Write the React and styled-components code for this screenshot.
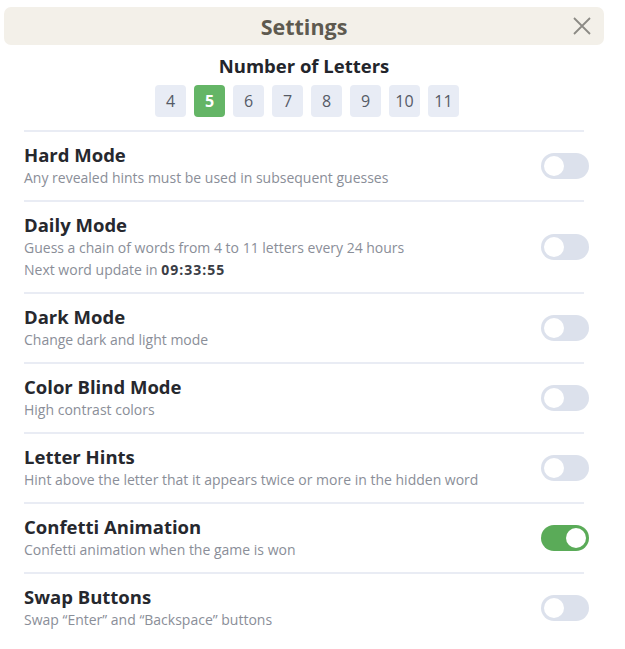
import React, { useState } from 'react';
import styled, { createGlobalStyle } from 'styled-components';

const GlobalStyle = createGlobalStyle`
  body {
    margin: 0;
    background: #ffffff;
    font-family: 'Open Sans', 'Noto Sans', sans-serif;
  }
`;

const Panel = styled.div`
  width: 625px;
  padding-top: 7px;
`;

const Header = styled.div`
  position: relative;
  margin-left: 4px;
  width: 600px;
  height: 38px;
  background: #f3f0e9;
  border-radius: 7px;
  display: flex;
  align-items: center;
  justify-content: center;
`;

const Title = styled.h2`
  margin: 0;
  font-size: 21.5px;
  font-weight: 700;
  color: #5e5a50;
`;

const CloseButton = styled.button`
  position: absolute;
  right: 12px;
  top: 9px;
  width: 20px;
  height: 20px;
  padding: 0;
  border: none;
  background: none;
  cursor: pointer;
  display: flex;
  align-items: center;
  justify-content: center;
`;

const Body = styled.div`
  width: 560px;
  margin: 0 0 0 24px;
`;

const LettersSection = styled.div`
  display: flex;
  flex-direction: column;
  align-items: center;
  padding: 8px 0 13px;
`;

const SectionTitle = styled.div`
  font-size: 18.5px;
  font-weight: 700;
  color: #23252b;
  line-height: 26px;
`;

const LetterRow = styled.div`
  display: flex;
  gap: 8px;
  margin-top: 6px;
  margin-left: 6px;
`;

const LetterButton = styled.button`
  width: 31px;
  height: 32px;
  padding: 0;
  border: none;
  border-radius: 4px;
  font-family: inherit;
  font-size: 16px;
  font-weight: ${({ active }) => (active ? 700 : 400)};
  background: ${({ active }) => (active ? '#64b566' : '#e8ecf5')};
  color: ${({ active }) => (active ? '#ffffff' : '#555a66')};
  cursor: pointer;
`;

const Row = styled.div`
  display: flex;
  align-items: center;
  justify-content: space-between;
  border-top: 2px solid #e9ecf4;
  padding: 11px 0 11px;
`;

const RowText = styled.div`
  display: flex;
  flex-direction: column;
`;

const RowTitle = styled.div`
  font-size: 18.5px;
  font-weight: 700;
  color: #26282e;
  line-height: 24px;
`;

const RowDesc = styled.div`
  font-size: 14px;
  color: #8a8e98;
  line-height: 22px;
`;

const Timer = styled.b`
  color: #3a3d45;
  font-weight: 700;
  letter-spacing: 1px;
`;

const Toggle = styled.button`
  position: relative;
  width: 48px;
  height: 26px;
  padding: 0;
  margin-right: -5px;
  border: none;
  border-radius: 13px;
  background: ${({ on }) => (on ? '#5aab58' : '#dce1ec')};
  cursor: pointer;

  &::after {
    content: '';
    position: absolute;
    top: 3px;
    left: ${({ on }) => (on ? '25px' : '3px')};
    width: 20px;
    height: 20px;
    border-radius: 50%;
    background: #ffffff;
  }
`;

const SETTINGS = [
  { key: 'hard', title: 'Hard Mode', desc: ['Any revealed hints must be used in subsequent guesses'] },
  { key: 'daily', title: 'Daily Mode', desc: ['Guess a chain of words from 4 to 11 letters every 24 hours'], timer: '09:33:55' },
  { key: 'dark', title: 'Dark Mode', desc: ['Change dark and light mode'] },
  { key: 'blind', title: 'Color Blind Mode', desc: ['High contrast colors'] },
  { key: 'hints', title: 'Letter Hints', desc: ['Hint above the letter that it appears twice or more in the hidden word'] },
  { key: 'confetti', title: 'Confetti Animation', desc: ['Confetti animation when the game is won'] },
  { key: 'swap', title: 'Swap Buttons', desc: ['Swap \u201CEnter\u201D and \u201CBackspace\u201D buttons'] },
];

const LETTERS = [4, 5, 6, 7, 8, 9, 10, 11];

export default function App() {
  const [letters, setLetters] = useState(5);
  const [values, setValues] = useState({ confetti: true });

  const flip = (key) => setValues((v) => ({ ...v, [key]: !v[key] }));

  return (
    <>
      <GlobalStyle />
      <Panel>
        <Header>
          <Title>Settings</Title>
          <CloseButton aria-label="Close">
            <svg width="18" height="18" viewBox="0 0 18 18">
              <path d="M1 1 L17 17 M17 1 L1 17" stroke="#8c8a85" strokeWidth="1.8" fill="none" />
            </svg>
          </CloseButton>
        </Header>
        <Body>
          <LettersSection>
            <SectionTitle>Number of Letters</SectionTitle>
            <LetterRow>
              {LETTERS.map((n) => (
                <LetterButton key={n} active={n === letters} onClick={() => setLetters(n)}>
                  {n}
                </LetterButton>
              ))}
            </LetterRow>
          </LettersSection>
          {SETTINGS.map((s) => (
            <Row key={s.key}>
              <RowText>
                <RowTitle>{s.title}</RowTitle>
                {s.desc.map((d) => (
                  <RowDesc key={d}>{d}</RowDesc>
                ))}
                {s.timer && (
                  <RowDesc>
                    Next word update in <Timer>{s.timer}</Timer>
                  </RowDesc>
                )}
              </RowText>
              <Toggle on={!!values[s.key]} onClick={() => flip(s.key)} />
            </Row>
          ))}
        </Body>
      </Panel>
    </>
  );
}
